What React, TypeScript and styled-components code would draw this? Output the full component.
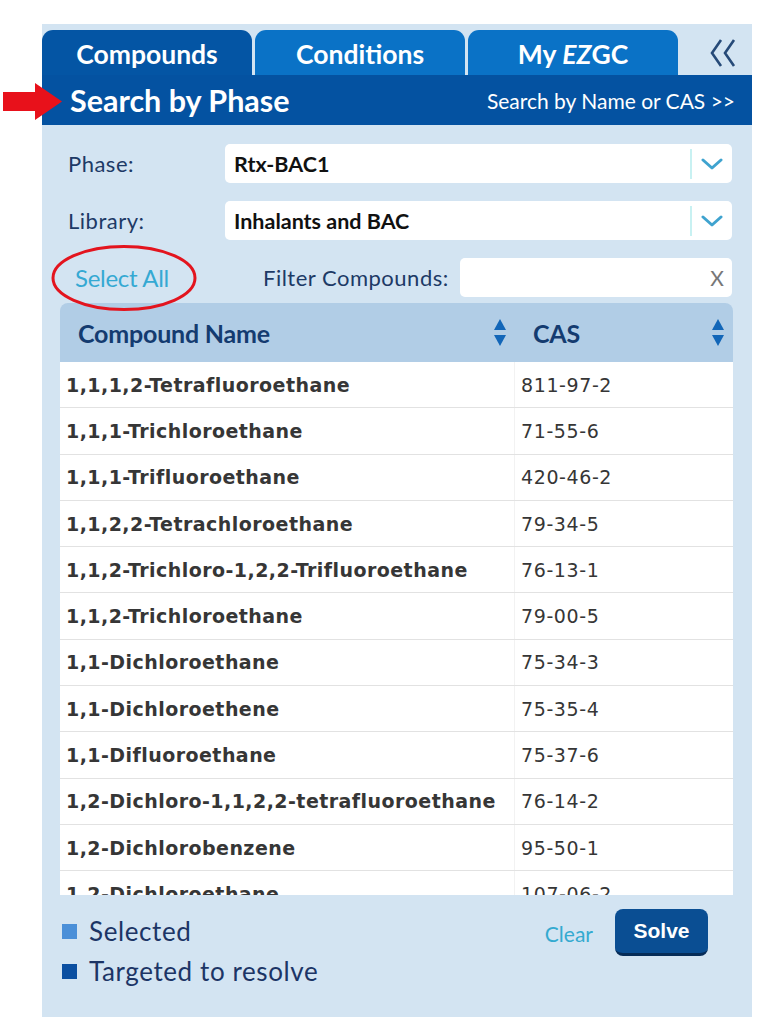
import React from "react";
import styled, { createGlobalStyle } from "styled-components";

const Global = createGlobalStyle`
  html, body { margin: 0; padding: 0; background: #ffffff; }
  body { font-family: Lato, "Open Sans", sans-serif; }
  * { box-sizing: border-box; }
`;

const Page = styled.div`
  position: relative;
  padding: 24px 16px 13px 42px;
`;

const Panel = styled.div`
  position: relative;
  width: 710px;
  height: 993px;
  background: #d3e4f2;
  padding-top: 6px;
  display: flex;
  flex-direction: column;
`;

const TabBar = styled.div`
  display: flex;
  gap: 3px;
  height: 45px;
`;

const Tab = styled.div<{ $active?: boolean }>`
  width: 210px;
  border-radius: 11px 11px 0 0;
  background: ${(p) => (p.$active ? "#0455a4" : "#0a72c6")};
  color: #ffffff;
  font-weight: 700;
  font-size: 26.5px;
  display: flex;
  align-items: center;
  justify-content: center;
  padding-top: 2px;
  em { font-style: italic; }
`;

const Collapse = styled.div`
  flex: 1;
  display: flex;
  align-items: center;
  justify-content: flex-end;
  padding-right: 15px;
`;

const HeaderBar = styled.div`
  height: 50px;
  background: #0452a1;
  display: flex;
  align-items: center;
  justify-content: space-between;
  padding: 0 17px 0 28px;
  color: #ffffff;
`;

const HeaderTitle = styled.div`
  font-weight: 700;
  font-size: 30.5px;
`;

const HeaderLink = styled.div`
  font-size: 21px;
`;

const Form = styled.div`
  display: flex;
  flex-direction: column;
  gap: 18px;
  padding: 19px 20px 0 26px;
`;

const Row = styled.div`
  display: flex;
  align-items: center;
`;

const Label = styled.div<{ $w: number }>`
  width: ${(p) => p.$w}px;
  font-size: 22px;
  color: #1d3a66;
  letter-spacing: 0.5px;
`;

const Select = styled.div`
  flex: 1;
  height: 39px;
  background: #ffffff;
  border-radius: 5px;
  display: flex;
  align-items: center;
  padding-left: 9px;
  font-weight: 700;
  font-size: 21.5px;
  color: #111111;
`;

const SelectText = styled.div`
  flex: 1;
`;

const SelectToggle = styled.div`
  width: 42px;
  height: 30px;
  border-left: 2px solid #c8f1f2;
  display: flex;
  align-items: center;
  justify-content: center;
`;

const SelectAll = styled.div`
  width: 195px;
  padding-left: 7px;
  font-size: 24px;
  color: #35a9d3;
  letter-spacing: -0.3px;
`;

const FilterInput = styled.div`
  flex: 1;
  height: 39px;
  background: #ffffff;
  border-radius: 5px;
  display: flex;
  align-items: center;
  justify-content: flex-end;
  padding-right: 8px;
  font-size: 21px;
  color: #777777;
`;

const Table = styled.div`
  margin: 6px 19px 0 18px;
  display: flex;
  flex-direction: column;
`;

const TableHead = styled.div`
  height: 59px;
  background: #b1cde6;
  border-radius: 8px 8px 0 0;
  display: flex;
  align-items: center;
`;

const HeadCell = styled.div<{ $w?: number }>`
  ${(p) => (p.$w ? `width: ${p.$w}px;` : "flex: 1;")}
  display: flex;
  align-items: center;
  justify-content: space-between;
  padding: 0 8px 0 18px;
  font-weight: 700;
  font-size: 25px;
  color: #143b70;
  letter-spacing: -0.2px;
`;

const TableBody = styled.div`
  height: 533px;
  overflow: hidden;
  background: #ffffff;
`;

const BodyRow = styled.div`
  height: 46.3px;
  display: flex;
  align-items: center;
  border-bottom: 1px solid #e2e2e2;
  font-family: "DejaVu Sans", Verdana, sans-serif;
  color: #363636;
  font-size: 19px;
`;

const NameCell = styled.div`
  width: 455px;
  height: 100%;
  display: flex;
  align-items: center;
  padding-left: 6px;
  font-weight: 700;
  letter-spacing: 0.45px;
  white-space: nowrap;
  border-right: 1px solid #f2f2f2;
`;

const CasCell = styled.div`
  flex: 1;
  padding-left: 6px;
  letter-spacing: 0.6px;
  white-space: nowrap;
`;

const Footer = styled.div`
  display: flex;
  justify-content: space-between;
  padding: 14px 44px 0 20px;
`;

const Legend = styled.div`
  display: flex;
  flex-direction: column;
  gap: 8px;
  padding-top: 6px;
`;

const LegendItem = styled.div`
  display: flex;
  align-items: center;
  gap: 12px;
  font-size: 26px;
  color: #1c3566;
  letter-spacing: 0.6px;
`;

const Swatch = styled.span<{ $c: string }>`
  width: 15px;
  height: 15px;
  background: ${(p) => p.$c};
`;

const Actions = styled.div`
  display: flex;
  align-items: flex-start;
  gap: 22px;
`;

const ClearLink = styled.div`
  font-size: 21px;
  color: #34aad0;
  margin-top: 12px;
`;

const SolveButton = styled.div`
  width: 93px;
  height: 47px;
  background: #0a4e93;
  border-radius: 8px;
  border-bottom: 3px solid #062c58;
  color: #ffffff;
  font-family: "Liberation Sans", Arial, sans-serif;
  font-weight: 700;
  font-size: 21px;
  display: flex;
  align-items: center;
  justify-content: center;
`;

const Arrow = styled.svg`
  position: absolute;
  left: 3px;
  top: 83px;
`;

const Ellipse = styled.svg`
  position: absolute;
  left: 50px;
  top: 244px;
`;

const compounds: [string, string][] = [
  ["1,1,1,2-Tetrafluoroethane", "811-97-2"],
  ["1,1,1-Trichloroethane", "71-55-6"],
  ["1,1,1-Trifluoroethane", "420-46-2"],
  ["1,1,2,2-Tetrachloroethane", "79-34-5"],
  ["1,1,2-Trichloro-1,2,2-Trifluoroethane", "76-13-1"],
  ["1,1,2-Trichloroethane", "79-00-5"],
  ["1,1-Dichloroethane", "75-34-3"],
  ["1,1-Dichloroethene", "75-35-4"],
  ["1,1-Difluoroethane", "75-37-6"],
  ["1,2-Dichloro-1,1,2,2-tetrafluoroethane", "76-14-2"],
  ["1,2-Dichlorobenzene", "95-50-1"],
  ["1,2-Dichloroethane", "107-06-2"],
];

const Chevron = () => (
  <svg width="22" height="14" viewBox="0 0 22 14">
    <polyline points="2,3 11,11 20,3" fill="none" stroke="#3fa3cf" strokeWidth="3" strokeLinecap="round" strokeLinejoin="round" />
  </svg>
);

const SortIcon = () => (
  <svg width="14" height="30" viewBox="0 0 14 30">
    <polygon points="7,1 13,12 1,12" fill="#1266b8" />
    <polygon points="1,17 13,17 7,28" fill="#1266b8" />
  </svg>
);

const DoubleChevron = () => (
  <svg width="28" height="30" viewBox="0 0 28 30">
    <polyline points="12,2 3,15 12,28" fill="none" stroke="#264a78" strokeWidth="2.6" />
    <polyline points="25,2 16,15 25,28" fill="none" stroke="#264a78" strokeWidth="2.6" />
  </svg>
);

export default function App() {
  return (
    <Page>
      <Global />
      <Panel>
        <TabBar>
          <Tab $active>Compounds</Tab>
          <Tab>Conditions</Tab>
          <Tab>
            My&nbsp;<em>EZ</em>GC
          </Tab>
          <Collapse>
            <DoubleChevron />
          </Collapse>
        </TabBar>
        <HeaderBar>
          <HeaderTitle>Search by Phase</HeaderTitle>
          <HeaderLink>Search by Name or CAS &gt;&gt;</HeaderLink>
        </HeaderBar>
        <Form>
          <Row>
            <Label $w={157}>Phase:</Label>
            <Select>
              <SelectText>Rtx-BAC1</SelectText>
              <SelectToggle>
                <Chevron />
              </SelectToggle>
            </Select>
          </Row>
          <Row>
            <Label $w={157}>Library:</Label>
            <Select>
              <SelectText>Inhalants and BAC</SelectText>
              <SelectToggle>
                <Chevron />
              </SelectToggle>
            </Select>
          </Row>
          <Row>
            <SelectAll>Select All</SelectAll>
            <Label $w={197}>Filter Compounds:</Label>
            <FilterInput>X</FilterInput>
          </Row>
        </Form>
        <Table>
          <TableHead>
            <HeadCell $w={455}>
              Compound Name
              <SortIcon />
            </HeadCell>
            <HeadCell>
              CAS
              <SortIcon />
            </HeadCell>
          </TableHead>
          <TableBody>
            {compounds.map(([name, cas]) => (
              <BodyRow key={name}>
                <NameCell>{name}</NameCell>
                <CasCell>{cas}</CasCell>
              </BodyRow>
            ))}
          </TableBody>
        </Table>
        <Footer>
          <Legend>
            <LegendItem>
              <Swatch $c="#4a8fd8" />
              Selected
            </LegendItem>
            <LegendItem>
              <Swatch $c="#0b4fa1" />
              Targeted to resolve
            </LegendItem>
          </Legend>
          <Actions>
            <ClearLink>Clear</ClearLink>
            <SolveButton>Solve</SolveButton>
          </Actions>
        </Footer>
      </Panel>
      <Arrow width="60" height="37" viewBox="0 0 60 37">
        <polygon points="0,9 32,9 32,0 59,18.5 32,37 32,28 0,28" fill="#e8111b" />
      </Arrow>
      <Ellipse width="148" height="68" viewBox="0 0 148 68">
        <ellipse cx="74" cy="34" rx="71" ry="31.5" fill="none" stroke="#e3141e" strokeWidth="3" />
      </Ellipse>
    </Page>
  );
}
